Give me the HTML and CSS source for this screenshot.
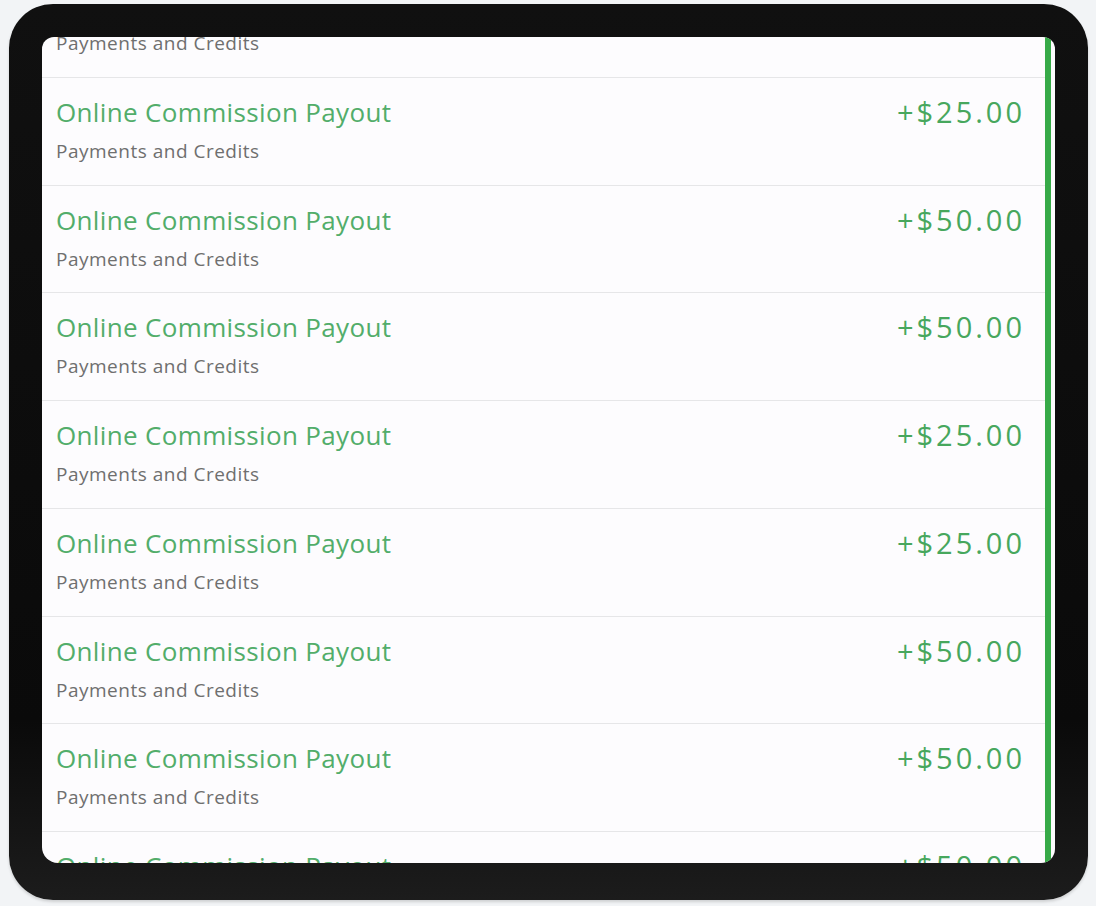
FILE: index.html
```html
<!DOCTYPE html>
<html lang="en">
<head>
<meta charset="utf-8">
<title>Transactions</title>
<link rel="stylesheet" href="styles.css">
</head>
<body>
<div class="device">
  <div class="screen">
    <ul class="list">
      <li class="row"><div class="text"><span class="title">Online Commission Payout</span><span class="sub">Payments and Credits</span></div><span class="amount">+$50.00</span></li>
      <li class="row"><div class="text"><span class="title">Online Commission Payout</span><span class="sub">Payments and Credits</span></div><span class="amount">+$25.00</span></li>
      <li class="row"><div class="text"><span class="title">Online Commission Payout</span><span class="sub">Payments and Credits</span></div><span class="amount">+$50.00</span></li>
      <li class="row"><div class="text"><span class="title">Online Commission Payout</span><span class="sub">Payments and Credits</span></div><span class="amount">+$50.00</span></li>
      <li class="row"><div class="text"><span class="title">Online Commission Payout</span><span class="sub">Payments and Credits</span></div><span class="amount">+$25.00</span></li>
      <li class="row"><div class="text"><span class="title">Online Commission Payout</span><span class="sub">Payments and Credits</span></div><span class="amount">+$25.00</span></li>
      <li class="row"><div class="text"><span class="title">Online Commission Payout</span><span class="sub">Payments and Credits</span></div><span class="amount">+$50.00</span></li>
      <li class="row"><div class="text"><span class="title">Online Commission Payout</span><span class="sub">Payments and Credits</span></div><span class="amount">+$50.00</span></li>
      <li class="row"><div class="text"><span class="title">Online Commission Payout</span><span class="sub">Payments and Credits</span></div><span class="amount">+$50.00</span></li>
    </ul>
    <div class="scrollbar"></div>
  </div>
</div>
</body>
</html>
```
FILE: styles.css
```css
html, body {
  margin: 0;
  padding: 0;
  background: #f2f4f6;
}
body {
  width: 1096px;
  height: 906px;
  overflow: hidden;
}
.device {
  box-sizing: border-box;
  width: 1079px;
  height: 896px;
  margin: 4px 0 0 9px;
  padding: 33px 33px 37px 33px;
  border-radius: 44px;
  background: linear-gradient(180deg, #101010 0%, #0a0a0a 80%, #1c1c1c 100%);
  box-shadow: 0 2px 3px rgba(0,0,0,0.15);
}
.screen {
  height: 100%;
  display: flex;
  background: #fdfcfe;
  border-radius: 12px 12px 14px 16px;
  overflow: hidden;
}
.list {
  flex: 1;
  list-style: none;
  margin: -67px 0 0 0;
  padding: 0;
}
.row {
  box-sizing: border-box;
  height: 107.75px;
  display: flex;
  justify-content: space-between;
  padding: 18px 20px 0 14px;
  border-bottom: 1px solid #e6e6e8;
}
.text {
  display: flex;
  flex-direction: column;
}
.title {
  font-family: "Open Sans", sans-serif;
  font-size: 26px;
  line-height: 32px;
  color: #52ad6a;
  letter-spacing: 0.35px;
}
.sub {
  margin-top: 11px;
  font-family: "Open Sans", sans-serif;
  font-size: 19px;
  line-height: 24px;
  color: #6f6f6f;
  letter-spacing: 0.5px;
}
.amount {
  font-family: "Open Sans", sans-serif;
  font-size: 29px;
  line-height: 32px;
  color: #47a75d;
  letter-spacing: 3px;
}
.scrollbar {
  width: 6px;
  margin-right: 4px;
  background: #37aa48;
}
```
